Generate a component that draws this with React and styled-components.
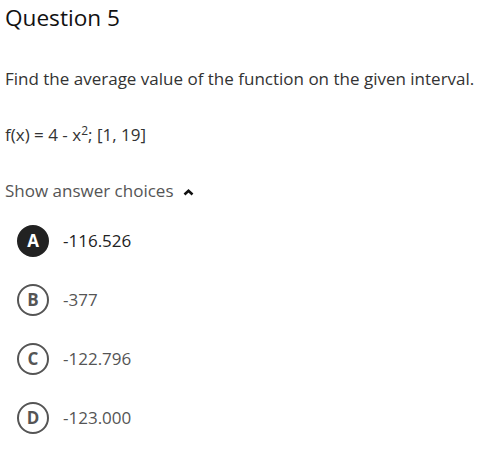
import React from 'react'
import styled, { createGlobalStyle } from 'styled-components'

const GlobalStyle = createGlobalStyle`
  body {
    margin: 0;
    background: #fff;
    font-family: "Open Sans", "Liberation Sans", sans-serif;
  }
`

const Page = styled.div`
  padding: 3px 5px 0 5px;
  color: #333;
`

const Title = styled.h2`
  margin: 0;
  font-size: 22.6px;
  font-weight: 400;
  line-height: 30px;
  color: #111;
`

const Prompt = styled.p`
  margin: 34px 0 0 0;
  font-size: 17px;
  line-height: 24px;
  color: #333;
`

const Formula = styled.p`
  margin: 33px 0 0 0;
  font-size: 17px;
  line-height: 22px;
  color: #333;

  sup {
    font-size: 12px;
    line-height: 0;
    vertical-align: 6px;
  }
`

const Toggle = styled.div`
  margin-top: 33px;
  display: flex;
  align-items: center;
  gap: 9px;
  font-size: 17px;
  line-height: 24px;
  color: #555;

  svg {
    margin-top: 2px;
  }
`

const Choices = styled.ul`
  list-style: none;
  margin: 22px 0 0 0;
  padding: 0 0 0 12px;
  display: flex;
  flex-direction: column;
  gap: 27px;
`

const Choice = styled.li`
  display: flex;
  align-items: center;
  gap: 14px;
  font-size: 17px;
  line-height: 32px;
  color: ${p => (p.selected ? '#222' : '#555')};
`

const Badge = styled.span`
  width: 32px;
  height: 32px;
  box-sizing: border-box;
  border-radius: 50%;
  display: flex;
  align-items: center;
  justify-content: center;
  font-size: 17px;
  font-weight: 700;
  background: ${p => (p.selected ? '#222' : '#fff')};
  color: ${p => (p.selected ? '#fff' : '#555')};
  border: 2px solid ${p => (p.selected ? '#222' : '#555')};
`

const choices = [
  { key: 'A', value: '-116.526', selected: true },
  { key: 'B', value: '-377' },
  { key: 'C', value: '-122.796' },
  { key: 'D', value: '-123.000' },
]

const App = () => {
  return (
    <Page>
      <GlobalStyle />
      <Title>Question 5</Title>
      <Prompt>Find the average value of the function on the given interval.</Prompt>
      <Formula>
        f(x) = 4 - x<sup>2</sup>; [1, 19]
      </Formula>
      <Toggle>
        Show answer choices
        <svg width="11" height="7" viewBox="0 0 11 7">
          <path d="M1.5 5.5 L5.5 1.8 L9.5 5.5" stroke="#111" strokeWidth="2.6" fill="none" />
        </svg>
      </Toggle>
      <Choices>
        {choices.map(c => (
          <Choice key={c.key} selected={c.selected}>
            <Badge selected={c.selected}>{c.key}</Badge>
            {c.value}
          </Choice>
        ))}
      </Choices>
    </Page>
  )
}

export default App
